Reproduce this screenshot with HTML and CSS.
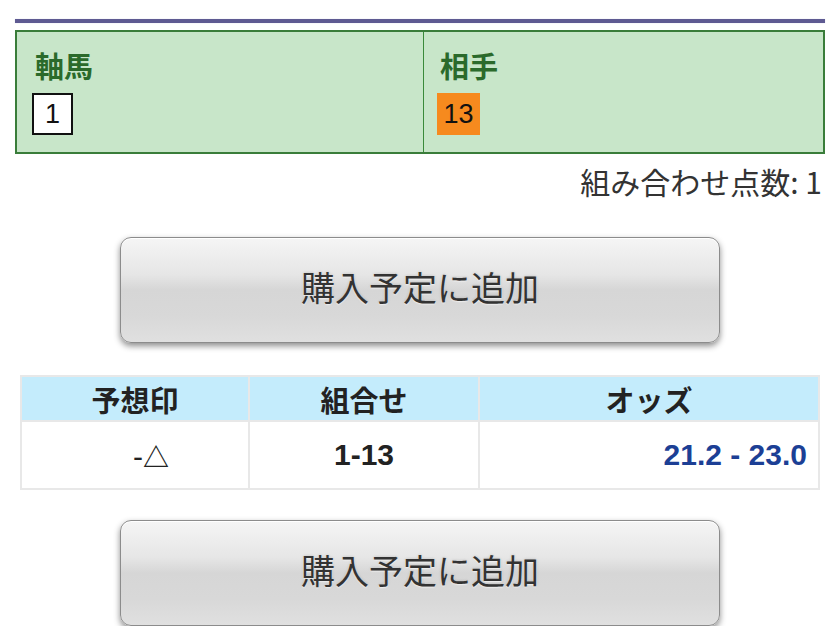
FILE: index.html
```html
<!DOCTYPE html>
<html lang="ja">
<head>
<meta charset="utf-8">
<link rel="stylesheet" href="styles.css">
</head>
<body>
<div class="page">
  <div class="rule"></div>
  <div class="picks">
    <div class="pick pick-first">
      <div class="pick-label">軸馬</div>
      <span class="num num-white">1</span>
    </div>
    <div class="pick pick-second">
      <div class="pick-label">相手</div>
      <span class="num num-orange">13</span>
    </div>
  </div>
  <div class="count">組み合わせ点数: 1</div>
  <div class="btn-row"><button class="btn">購入予定に追加</button></div>
  <table class="result">
    <thead>
      <tr><th class="c1">予想印</th><th class="c2">組合せ</th><th class="c3">オッズ</th></tr>
    </thead>
    <tbody>
      <tr><td class="mark">-<span class="tri">△</span></td><td class="combo">1-13</td><td class="odds">21.2 - 23.0</td></tr>
    </tbody>
  </table>
  <div class="btn-row btn-row-last"><button class="btn">購入予定に追加</button></div>
</div>
</body>
</html>
```
FILE: styles.css
```css
* { box-sizing: border-box; }
html, body { margin: 0; padding: 0; background: #fff; }
body {
  font-family: "Liberation Sans", "Noto Sans CJK JP", sans-serif;
  color: #222;
}
.page { padding: 19px 15px 0 15px; }
.rule {
  height: 4px;
  background: #5e5a92;
  box-shadow: 0 0 1px #b8b6d6;
}
.picks {
  margin-top: 7px;
  height: 124px;
  display: grid;
  grid-template-columns: 406px 1fr;
  background: #c8e6c9;
  border: 2px solid #3a7d3a;
}
.pick { padding-top: 15px; }
.pick-first { padding-left: 15px; }
.pick-second { padding-left: 13px; border-left: 1px solid #3a8a3a; }
.pick-label {
  font-family: "Noto Sans CJK JP", sans-serif;
  font-size: 29px;
  font-weight: bold;
  color: #2b6a2b;
  line-height: 36px;
  padding-left: 3px;
}
.num {
  display: inline-flex;
  align-items: center;
  justify-content: center;
  margin-top: 10px;
  height: 42px;
  font-size: 27px;
  color: #111;
}
.num-white { width: 41px; background: #fff; border: 2px solid #111; }
.num-orange { width: 43px; background: #f68a1e; }
.count {
  text-align: right;
  padding-right: 3px;
  margin-top: 7px;
  font-family: "Noto Sans CJK JP", sans-serif;
  font-size: 30px;
  line-height: 40px;
  color: #333;
}
.btn-row { display: flex; justify-content: center; margin-top: 36px; }
.btn-row-last { margin-top: 30px; }
.btn {
  width: 600px;
  height: 106px;
  border: 1px solid #8c8c8c;
  border-radius: 11px;
  background: linear-gradient(#f5f5f5 0%, #e6e6e6 35%, #d6d6d6 50%, #d8d8d8 75%, #e0e0e0 100%);
  box-shadow: 0 3px 6px rgba(0,0,0,0.45), inset 0 1px 0 #fff;
  font-family: "Noto Sans CJK JP", sans-serif;
  font-size: 34px;
  color: #333;
  text-shadow: 0 1px 2px rgba(255,255,255,0.9), 0 0 3px rgba(0,0,0,0.2);
  padding: 0 0 8px 0;
}
.result {
  margin: 32px 5px 0 5px;
  width: 800px;
  border-collapse: collapse;
  border: 2px solid #e8e8e8;
  table-layout: fixed;
}
.result th, .result td { border: 2px solid #e8e8e8; }
.result th {
  height: 45px;
  background: #c4ecfc;
  font-family: "Noto Sans CJK JP", sans-serif;
  font-size: 29px;
  font-weight: bold;
  color: #222;
  padding: 0;
}
.c1 { width: 228px; }
.c2 { width: 230px; }
.result td {
  height: 68px;
  font-size: 30px;
  font-weight: bold;
  color: #222;
  padding: 0;
}
.mark { text-align: center; padding-left: 32px !important; font-weight: normal !important; }
.tri { font-family: "Noto Sans CJK JP", sans-serif; font-size: 26px; font-weight: bold; }
.combo { text-align: center; }
.odds { text-align: right; padding-right: 11px !important; color: #1c3f95 !important; }
```
